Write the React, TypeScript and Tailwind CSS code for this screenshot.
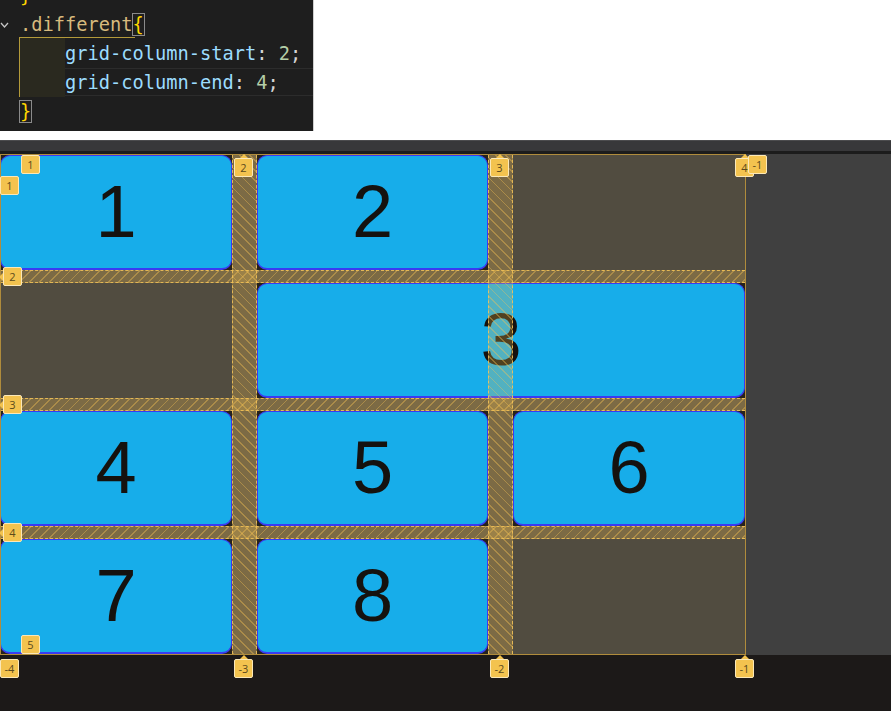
import React from "react";

const hatchV =
  "bg-[image:repeating-linear-gradient(45deg,rgba(242,192,82,0.55)_0px,rgba(242,192,82,0.55)_1.2px,rgba(240,190,80,0.27)_1.2px,rgba(240,190,80,0.27)_7px)]";
const hatchH =
  "bg-[image:repeating-linear-gradient(135deg,rgba(242,192,82,0.55)_0px,rgba(242,192,82,0.55)_1.2px,rgba(240,190,80,0.27)_1.2px,rgba(240,190,80,0.27)_7px)]";

function Item({ n, cls }: { n: string; cls: string }) {
  return (
    <div className={"bg-[#26221d] " + cls}>
      <div className="h-full rounded-[10px] bg-[#17adea] border border-[#3a3af2] border-b-2 flex items-center justify-center text-[74px] leading-none text-[#15120f] font-['Liberation_Sans',Arial,sans-serif]">
        {n}
      </div>
    </div>
  );
}

function Badge({ cls, t, p }: { cls: string; t: string; p?: "up" | "left" }) {
  return (
    <div
      className={
        "absolute h-[19px] min-w-[19px] px-[3px] flex items-center justify-center rounded-[2px] bg-[#f3c34f] border border-[#fbe8b8] text-[11px] leading-none text-[#5b4a1c] font-['Open_Sans',sans-serif] " +
        cls
      }
    >
      {p === "up" && (
        <span className="absolute left-1/2 -translate-x-1/2 -top-[5px] w-0 h-0 border-x-[4px] border-x-transparent border-b-[4px] border-b-[#f3c34f]" />
      )}
      {p === "left" && (
        <span className="absolute -left-[5px] top-1/2 -translate-y-1/2 w-0 h-0 border-y-[4px] border-y-transparent border-r-[4px] border-r-[#f3c34f]" />
      )}
      {t}
    </div>
  );
}

function CodeBlock() {
  return (
    <div className="relative w-[314px] h-[131px] shrink-0 bg-[#1e1e1e] border-r border-[#cfcfcf] overflow-hidden font-['DejaVu_Sans_Mono','Liberation_Mono',monospace] text-[18.7px] leading-[29px] text-[#d4d4d4]">
      {/* indent / bracket guides */}
      <div className="absolute left-[20px] top-[38px] w-[45px] h-[59px] bg-[#2a291f]" />
      <div className="absolute left-[19px] top-[37px] w-[116px] h-px bg-[#b39a3a]" />
      <div className="absolute left-[19px] top-[37px] w-px h-[60px] bg-[#b39a3a]" />
      <div className="absolute left-[65px] top-[68px] right-0 h-px bg-[#2c2c2c]" />
      <div className="absolute left-[65px] top-[95px] right-0 h-px bg-[#2c2c2c]" />
      <svg className="absolute left-[0px] top-[21px]" width="9" height="8" viewBox="0 0 9 8">
        <polyline points="1,2 4.5,6 8,2" fill="none" stroke="#c5c5c5" strokeWidth="1.3" />
      </svg>
      <div className="relative flex flex-col mt-[-19px]">
        <div className="pl-[20px] text-[#ffd700] whitespace-pre">{"}"}</div>
        <div className="pl-[20px] whitespace-pre">
          <span className="text-[#d7ba7d]">.different</span>
          <span className="text-[#ffd700] outline outline-1 outline-[#8a8a8a]">{"{"}</span>
        </div>
        <div className="pl-[65px] whitespace-pre">
          <span className="text-[#9cdcfe]">grid-column-start</span>
          <span>: </span>
          <span className="text-[#b5cea8]">2</span>
          <span>;</span>
        </div>
        <div className="pl-[65px] whitespace-pre">
          <span className="text-[#9cdcfe]">grid-column-end</span>
          <span>: </span>
          <span className="text-[#b5cea8]">4</span>
          <span>;</span>
        </div>
        <div className="pl-[20px] whitespace-pre">
          <span className="text-[#ffd700] outline outline-1 outline-[#8a8a8a]">{"}"}</span>
        </div>
      </div>
    </div>
  );
}

export default function App() {
  const vstrip =
    "absolute top-0 h-full w-[25px] border-x border-dashed border-[rgba(246,196,88,0.85)] " + hatchV;
  const hstrip =
    "absolute left-0 w-full h-[13px] border-y border-dashed border-[rgba(246,196,88,0.85)] " + hatchH;
  return (
    <div className="relative w-[891px] h-[711px] bg-white flex flex-col overflow-hidden">
      <CodeBlock />
      <div className="h-[9px] shrink-0" />
      <div className="h-[14px] shrink-0 bg-[#38383a] border-t border-[#4c4c4e] border-b-[3px] border-b-[#1c1c1c]" />
      <div className="flex h-[501px] shrink-0">
        <div className="relative w-[746px] border-y border-r border-[#b08c3c]">
          <div className="grid grid-cols-[232px_231px_232px] grid-rows-[repeat(4,115px)] gap-x-[25px] gap-y-[13px] h-[499px] bg-[#514c40]">
            <Item n="1" cls="col-start-1 row-start-1" />
            <Item n="2" cls="col-start-2 row-start-1" />
            <Item n="3" cls="col-start-2 col-end-4 row-start-2" />
            <Item n="4" cls="col-start-1 row-start-3" />
            <Item n="5" cls="col-start-2 row-start-3" />
            <Item n="6" cls="col-start-3 row-start-3" />
            <Item n="7" cls="col-start-1 row-start-4" />
            <Item n="8" cls="col-start-2 row-start-4" />
          </div>
          <div className={hstrip + " top-[115px]"} />
          <div className={hstrip + " top-[243px]"} />
          <div className={hstrip + " top-[371px]"} />
          <div className={vstrip + " left-[232px]"} />
          <div className={vstrip + " left-[488px]"} />
          <div className="absolute left-0 top-0 h-full w-px bg-[#b08c3c]" />
        </div>
        <div className="flex-1 bg-[#404040]" />
      </div>
      <div className="flex-1 bg-[#1c1918]" />

      {/* column line labels (top) */}
      <Badge cls="left-[21px] top-[155px]" t="1" />
      <Badge cls="left-[234px] top-[158px]" t="2" p="up" />
      <Badge cls="left-[490px] top-[158px]" t="3" p="up" />
      <Badge cls="left-[735px] top-[158px]" t="4" p="up" />
      <Badge cls="left-[748px] top-[155px]" t="-1" />
      {/* row line labels (left) */}
      <Badge cls="left-[0px] top-[176px]" t="1" />
      <Badge cls="left-[3px] top-[267px]" t="2" p="left" />
      <Badge cls="left-[3px] top-[395px]" t="3" p="left" />
      <Badge cls="left-[3px] top-[523px]" t="4" p="left" />
      <Badge cls="left-[21px] top-[635px]" t="5" />
      {/* bottom labels */}
      <Badge cls="left-[0px] top-[659px]" t="-4" />
      <Badge cls="left-[234px] top-[659px]" t="-3" p="up" />
      <Badge cls="left-[490px] top-[659px]" t="-2" p="up" />
      <Badge cls="left-[735px] top-[659px]" t="-1" p="up" />
    </div>
  );
}
